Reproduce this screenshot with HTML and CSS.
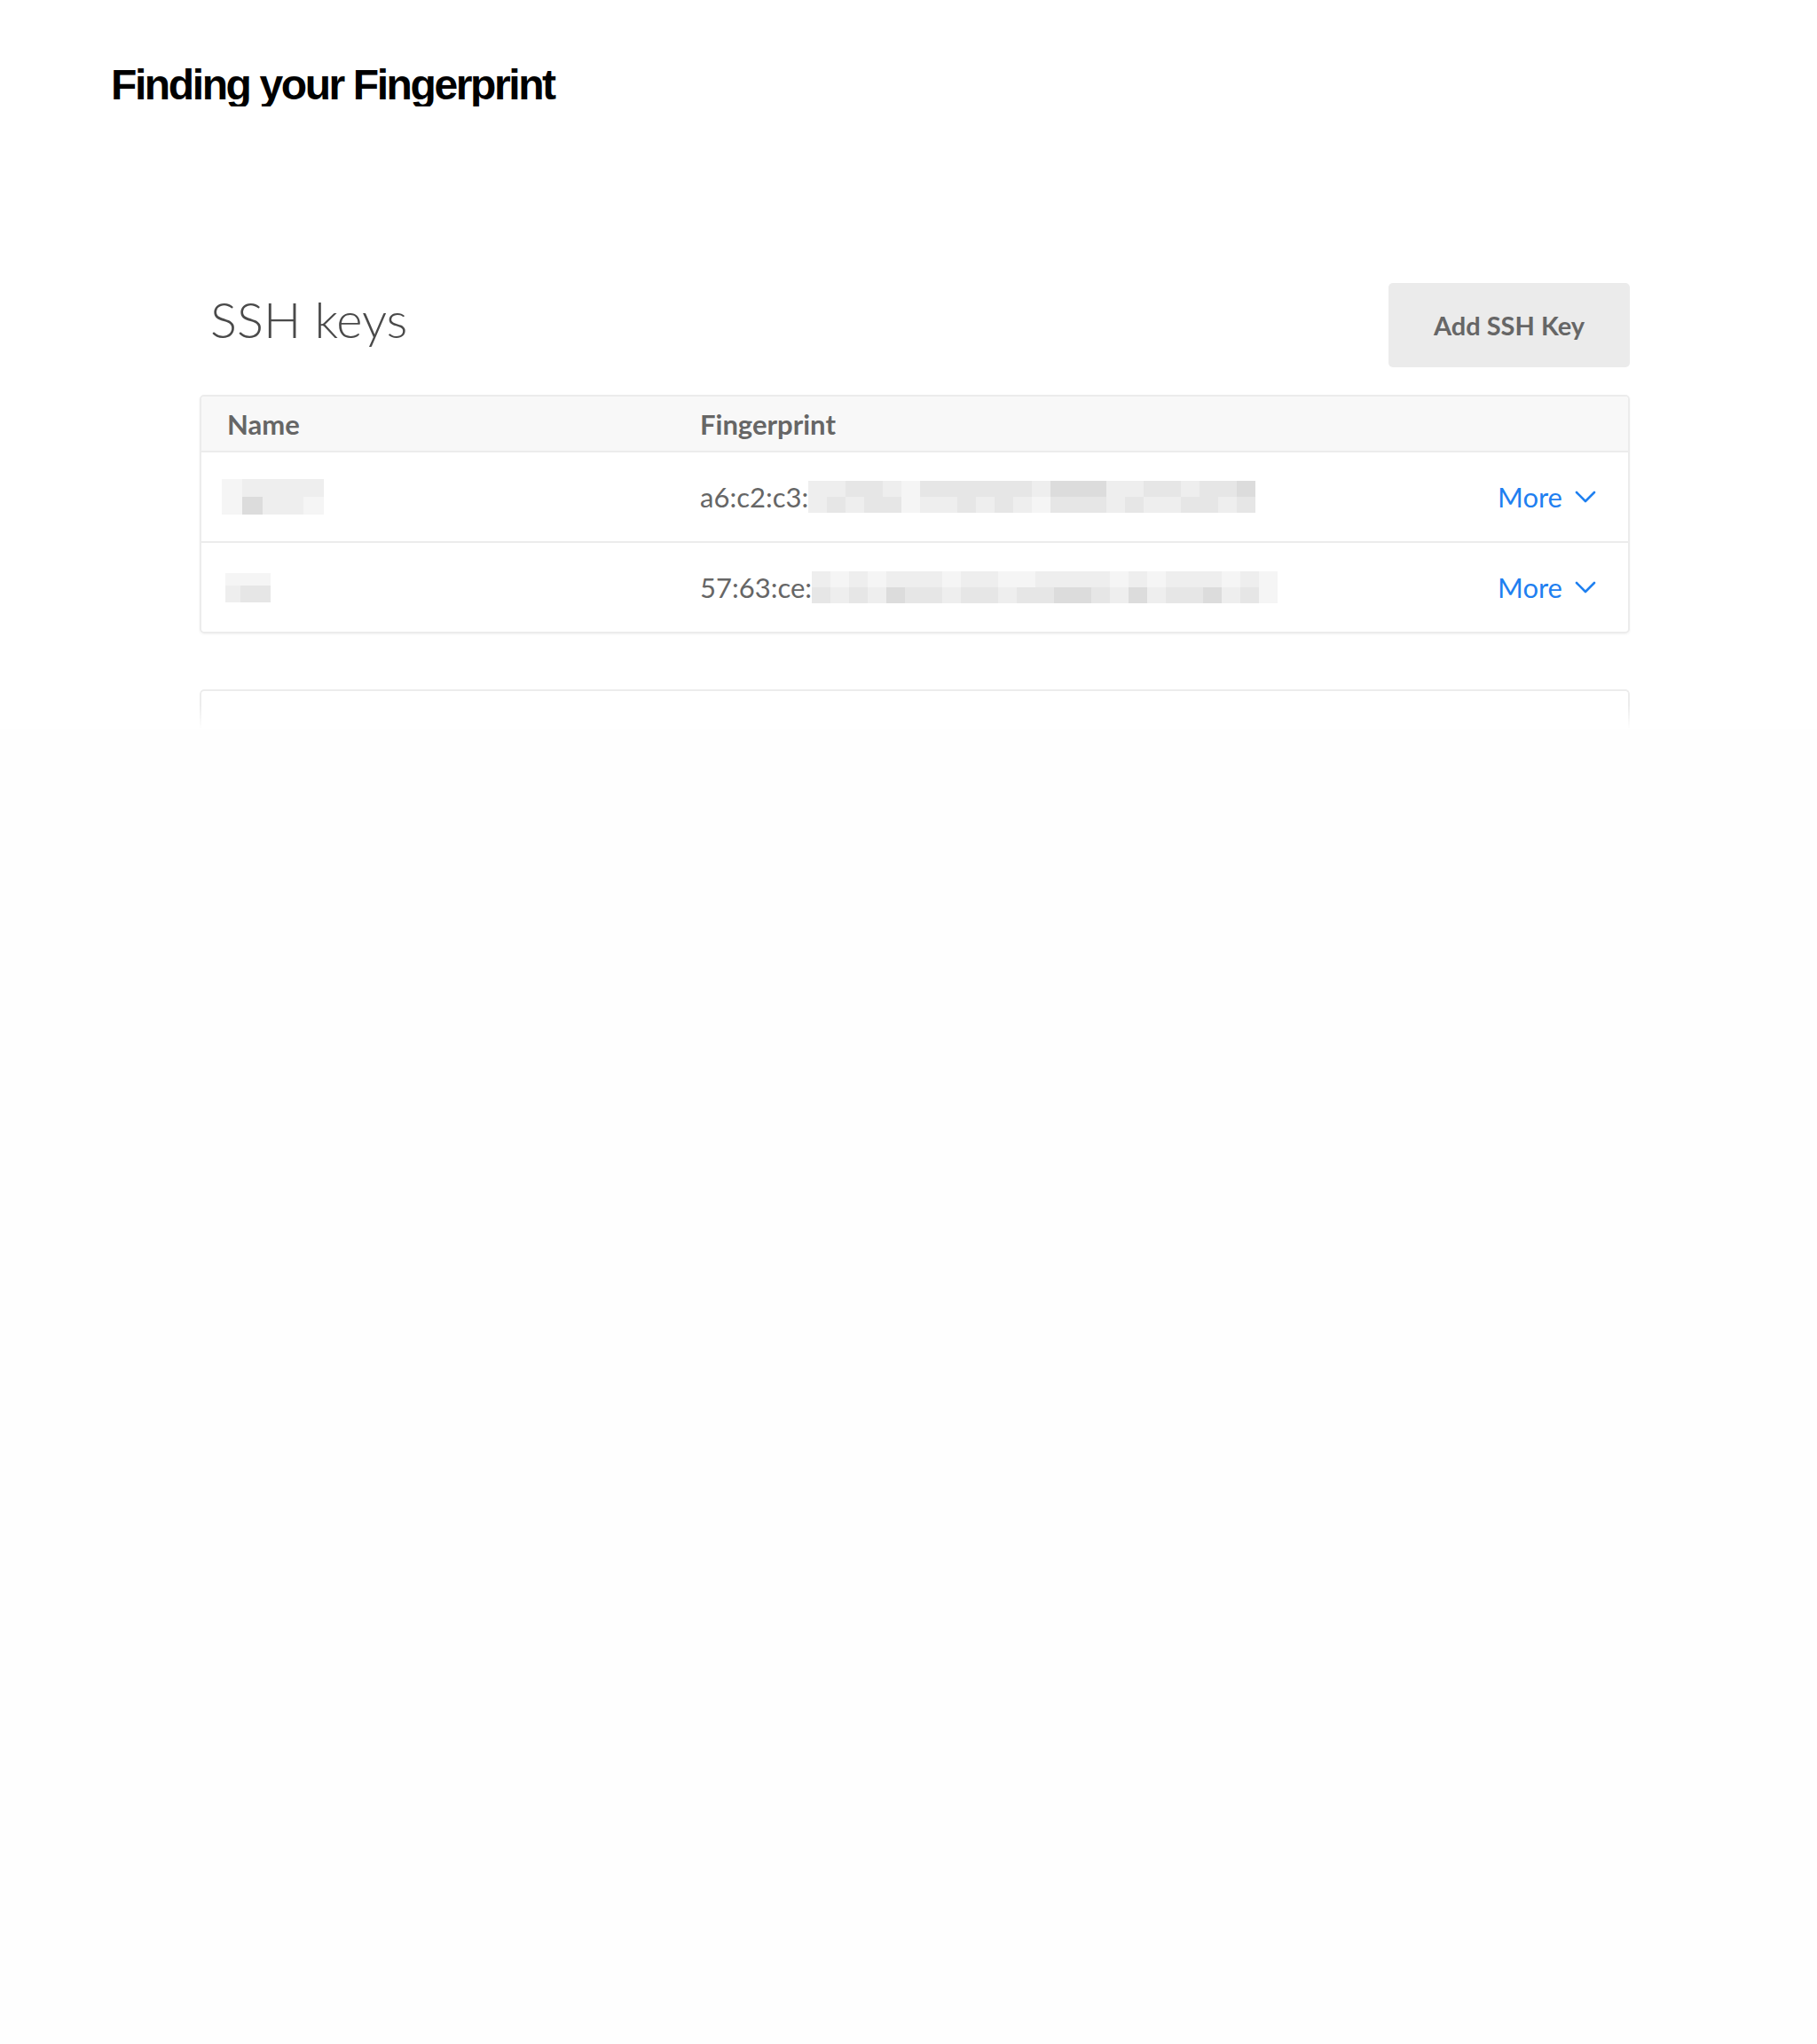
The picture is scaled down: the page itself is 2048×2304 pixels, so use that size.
FILE: index.html
```html
<!DOCTYPE html>
<html lang="en">
<head>
    <meta charset="UTF-8">
    <meta name="viewport" content="width=device-width, initial-scale=1.0">
    <title>Finding your Fingerprint</title>
    <link rel="stylesheet" href="styles.css">
</head>
<body>
    <header class="article-head">
        <h1>Finding your Fingerprint</h1>
    </header>

    <section class="shot">
        <div class="shot-inner">
            <div class="shot-head">
                <h2>SSH keys</h2>
                <button class="add-btn">Add SSH Key</button>
            </div>

            <div class="keys-card">
                <div class="keys-row keys-header">
                    <div class="cell-name">Name</div>
                    <div class="cell-fp">Fingerprint</div>
                    <div></div>
                </div>

                <!-- first key -->
                <div class="keys-row">
                    <div class="cell-name">
                        <span class="blur blur-name1">
                            <i class="a"></i><i class="a"></i>
                            <i class="b"></i><i class="d"></i>
                            <i class="b"></i><i class="b"></i>
                            <i class="b"></i><i class="b"></i>
                            <i class="b"></i><i class="a"></i>
                        </span>
                    </div>
                    <div class="cell-fp">
                        <span class="fp-text">a6:c2:c3:</span>
                        <span class="blur blur-fp">
                            <i class="b"></i><i class="b"></i>
                            <i class="b"></i><i class="c"></i>
                            <i class="c"></i><i class="b"></i>
                            <i class="c"></i><i class="c"></i>
                            <i class="b"></i><i class="c"></i>
                            <i class="a"></i><i class="a"></i>
                            <i class="c"></i><i class="b"></i>
                            <i class="c"></i><i class="b"></i>
                            <i class="c"></i><i class="c"></i>
                            <i class="c"></i><i class="b"></i>
                            <i class="c"></i><i class="c"></i>
                            <i class="c"></i><i class="b"></i>
                            <i class="b"></i><i class="a"></i>
                            <i class="d"></i><i class="c"></i>
                            <i class="d"></i><i class="c"></i>
                            <i class="d"></i><i class="c"></i>
                            <i class="b"></i><i class="b"></i>
                            <i class="b"></i><i class="c"></i>
                            <i class="c"></i><i class="b"></i>
                            <i class="c"></i><i class="b"></i>
                            <i class="b"></i><i class="c"></i>
                            <i class="c"></i><i class="c"></i>
                            <i class="c"></i><i class="b"></i>
                            <i class="d"></i><i class="c"></i>
                        </span>
                    </div>
                    <a class="more" href="#">More
                        <svg width="24" height="14" viewBox="0 0 24 14"><polyline points="2,2 12,12 22,2" fill="none" stroke="#1f80f0" stroke-width="2.6" stroke-linecap="round" stroke-linejoin="round"/></svg>
                    </a>
                </div>

                <!-- second key -->
                <div class="keys-row">
                    <div class="cell-name">
                        <span class="blur blur-name2">
                            <i class="a"></i><i class="b"></i>
                            <i class="a"></i><i class="c"></i>
                            <i class="a"></i><i class="c"></i>
                        </span>
                    </div>
                    <div class="cell-fp">
                        <span class="fp-text">57:63:ce:</span>
                        <span class="blur blur-fp">
                            <i class="b"></i><i class="c"></i>
                            <i class="a"></i><i class="b"></i>
                            <i class="b"></i><i class="c"></i>
                            <i class="a"></i><i class="b"></i>
                            <i class="b"></i><i class="d"></i>
                            <i class="b"></i><i class="c"></i>
                            <i class="b"></i><i class="c"></i>
                            <i class="a"></i><i class="b"></i>
                            <i class="b"></i><i class="c"></i>
                            <i class="b"></i><i class="c"></i>
                            <i class="a"></i><i class="b"></i>
                            <i class="a"></i><i class="c"></i>
                            <i class="b"></i><i class="c"></i>
                            <i class="b"></i><i class="d"></i>
                            <i class="b"></i><i class="d"></i>
                            <i class="b"></i><i class="c"></i>
                            <i class="a"></i><i class="b"></i>
                            <i class="b"></i><i class="d"></i>
                            <i class="a"></i><i class="b"></i>
                            <i class="b"></i><i class="c"></i>
                            <i class="b"></i><i class="c"></i>
                            <i class="b"></i><i class="d"></i>
                            <i class="a"></i><i class="b"></i>
                            <i class="b"></i><i class="c"></i>
                            <i class="a"></i><i class="a"></i>
                        </span>
                    </div>
                    <a class="more" href="#">More
                        <svg width="24" height="14" viewBox="0 0 24 14"><polyline points="2,2 12,12 22,2" fill="none" stroke="#1f80f0" stroke-width="2.6" stroke-linecap="round" stroke-linejoin="round"/></svg>
                    </a>
                </div>
            </div>

            <div class="next-card"></div>
        </div>
    </section>

    <div class="shot-rest"></div>
</body>
</html>
```

FILE: styles.css
```css
body {
    margin: 0;
    background-color: #fefefe;
    font-family: Lato, "Open Sans", sans-serif;
    min-height: 100vh;
    display: flex;
    flex-direction: column;
}
.article-head {
    background-color: #fff;
    padding: 72px 125px 0;
}
.article-head h1 {
    margin: 0;
    font-family: "Liberation Sans", Arial, sans-serif;
    font-weight: 700;
    font-size: 48px;
    line-height: 48px;
    letter-spacing: -2.4px;
    color: #000;
}
.shot {
    background-color: #fff;
    padding: 199px 0 0 225px;
}
.shot-inner {
    width: 1612px;
}
.shot-head {
    display: flex;
    justify-content: space-between;
    align-items: center;
    height: 95px;
}
.shot-head h2 {
    margin: 0 0 0 12px;
    padding-bottom: 14px;
    font-weight: 300;
    font-size: 56px;
    color: #4a4a4a;
}
.add-btn {
    width: 272px;
    height: 95px;
    border: none;
    border-radius: 5px;
    background-color: #ebebeb;
    font-family: Lato, sans-serif;
    font-weight: 700;
    font-size: 29px;
    color: #666;
}
.keys-card {
    margin-top: 31px;
    border: 2px solid #ececec;
    border-radius: 5px;
    box-shadow: 0 1px 3px rgba(0,0,0,0.05);
    overflow: hidden;
}
.keys-row {
    display: grid;
    grid-template-columns: 539px 1fr auto;
    align-items: center;
    height: 100px;
    padding: 0 36px 0 23px;
    border-top: 2px solid #ececec;
    font-size: 31px;
    color: #666;
}
.keys-header {
    height: 61px;
    border-top: none;
    background-color: #f8f8f8;
    font-weight: 700;
    font-size: 31px;
}
.keys-header .cell-name {
    padding-left: 6px;
}
.cell-fp {
    display: flex;
    align-items: center;
}
.blur {
    display: grid;
    grid-auto-flow: column;
}
.blur i {
    display: block;
}
.blur .a { background-color: #f5f5f5; }
.blur .b { background-color: #eeeeee; }
.blur .c { background-color: #e6e6e6; }
.blur .d { background-color: #dcdcdc; }
.blur-name1 {
    grid-template-rows: 20px 20px;
    grid-auto-columns: 23px;
}
.blur-name2 {
    margin-left: 4px;
    grid-template-rows: 14px 19px;
    grid-auto-columns: 17px;
}
.blur-fp {
    grid-template-rows: 18px 18px;
    grid-auto-columns: 21px;
}
.more {
    display: flex;
    align-items: center;
    gap: 14px;
    color: #1f80f0;
    text-decoration: none;
    font-size: 31px;
}
.next-card {
    margin-top: 63px;
    height: 43px;
    border: 2px solid #ececec;
    border-bottom: none;
    border-radius: 5px 5px 0 0;
    -webkit-mask-image: linear-gradient(to bottom, #000 40%, transparent);
    mask-image: linear-gradient(to bottom, #000 40%, transparent);
}
.shot-rest {
    flex: 1;
}
```
